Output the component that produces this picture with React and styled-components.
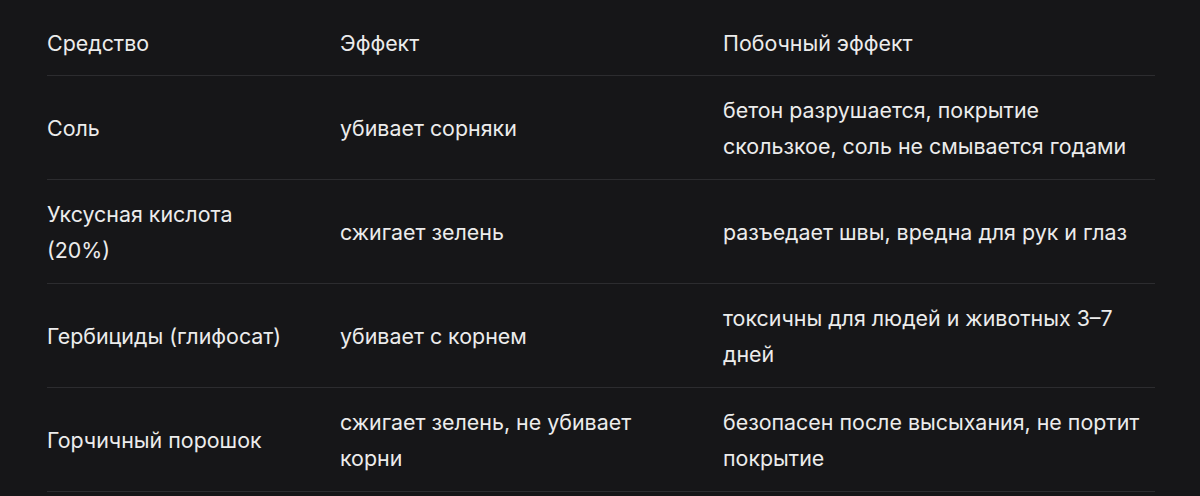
import styled, { createGlobalStyle } from 'styled-components';

const GlobalStyle = createGlobalStyle`
  html, body {
    margin: 0;
    padding: 0;
    background: #161618;
  }
  body {
    font-family: Inter, "Noto Sans", sans-serif;
    color: #ececec;
    -webkit-font-smoothing: antialiased;
  }
`;

const Page = styled.div`
  padding: 9px 45px 0 47px;
`;

const Table = styled.table`
  width: 1108px;
  border-collapse: collapse;
  table-layout: fixed;
  font-size: 21.4px;
  line-height: 36px;
`;

const HeadCell = styled.th`
  text-align: left;
  font-weight: 400;
  padding: 16px ${(p) => p.$pr}px 14px 0;
  border-bottom: 1px solid #2c2c2f;
  vertical-align: middle;
`;

const Cell = styled.td`
  padding: 16px ${(p) => p.$pr}px 15px 0;
  border-bottom: 1px solid #2c2c2f;
  vertical-align: middle;
`;

const columns = [
  { title: 'Средство', width: 293, pr: 44 },
  { title: 'Эффект', width: 383, pr: 30 },
  { title: 'Побочный эффект', width: 432, pr: 8 },
];

const rows = [
  ['Соль', 'убивает сорняки', 'бетон разрушается, покрытие скользкое, соль не смывается годами'],
  ['Уксусная кислота (20%)', 'сжигает зелень', 'разъедает швы, вредна для рук и глаз'],
  ['Гербициды (глифосат)', 'убивает с корнем', 'токсичны для людей и животных 3–7 дней'],
  ['Горчичный порошок', 'сжигает зелень, не убивает корни', 'безопасен после высыхания, не портит покрытие'],
];

export default function App() {
  return (
    <>
      <GlobalStyle />
      <Page>
        <Table>
          <colgroup>
            {columns.map((c) => (
              <col key={c.title} style={{ width: c.width }} />
            ))}
          </colgroup>
          <thead>
            <tr>
              {columns.map((c) => (
                <HeadCell key={c.title} $pr={c.pr}>{c.title}</HeadCell>
              ))}
            </tr>
          </thead>
          <tbody>
            {rows.map((r) => (
              <tr key={r[0]}>
                {r.map((text, i) => (
                  <Cell key={i} $pr={columns[i].pr}>{text}</Cell>
                ))}
              </tr>
            ))}
          </tbody>
        </Table>
      </Page>
    </>
  );
}
